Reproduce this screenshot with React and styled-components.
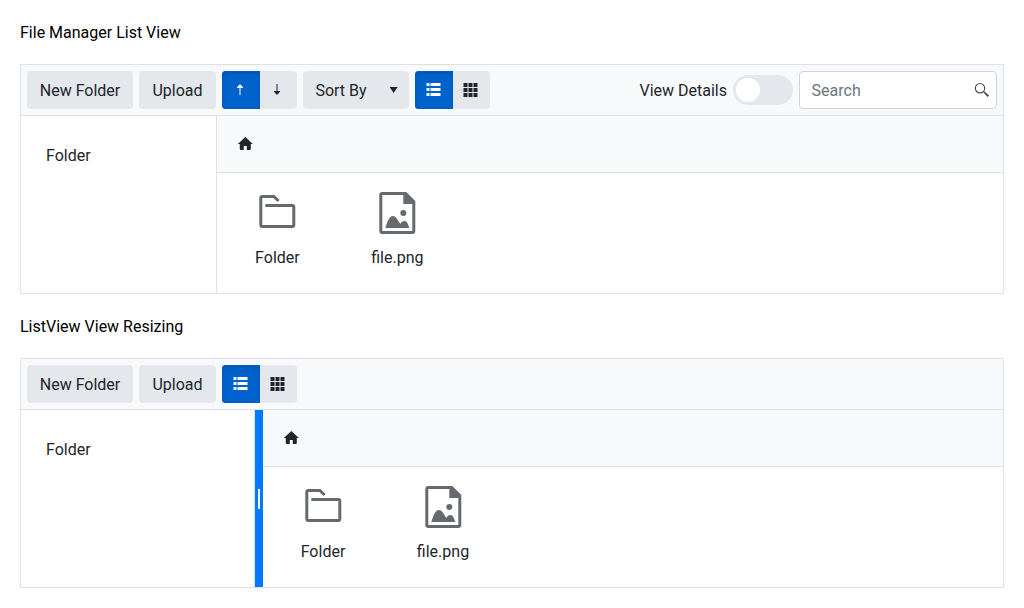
import React from 'react';
import styled, { createGlobalStyle, css } from 'styled-components';

const GlobalStyle = createGlobalStyle`
  *, *::before, *::after { box-sizing: border-box; }
  body {
    margin: 0;
    background: #fff;
    color: #000;
    font: 16px/24px Roboto, "Liberation Sans", sans-serif;
  }
`;

const Page = styled.main`
  display: flex;
  flex-direction: column;
  padding: 20px;
`;

const Title = styled.h2`
  margin: 1px 0 19px;
  font-size: 16px;
  font-weight: 400;
  line-height: 24px;
`;

const Manager = styled.section`
  display: flex;
  flex-direction: column;
  height: 230px;
  margin-bottom: 20px;
  border: 1px solid #dee2e6;
  color: #212529;
`;

const Toolbar = styled.div`
  display: flex;
  gap: 6px;
  height: 51px;
  padding: 6px;
  background: #f7f9fb;
  border-bottom: 1px solid #dee2e6;
`;

const Button = styled.button`
  display: flex;
  align-items: center;
  justify-content: ${(p) => (p.$menu ? 'space-between' : 'center')};
  width: ${(p) => p.$width}px;
  height: 38px;
  padding: ${(p) => (p.$menu ? '2px 8px 0 12.4px' : '2px 0 0')};
  border: 0;
  border-radius: 4px;
  background: #e4e7eb;
  color: #212529;
  font: inherit;
  white-space: nowrap;
`;

const ButtonGroup = styled.div`
  display: flex;
`;

const GroupButton = styled(Button)`
  padding: 0 1px 0 0;
  border-radius: 0 4px 4px 0;
  ${(p) =>
    p.$selected &&
    css`
      padding: 0;
      border-radius: 4px 0 0 4px;
      background: #0062cc;
      color: #fff;
      box-shadow: inset 0 0 0 1px #005cbf, inset 0 3px 5px rgba(0, 0, 0, 0.125);
    `}
`;

const SwitchLabel = styled.span`
  margin-left: auto;
  padding-top: 1px;
  line-height: 38px;
`;

const Switch = styled.span`
  display: flex;
  align-self: center;
  width: 60px;
  height: 30px;
  padding: 3px;
  border-radius: 15px;
  background: #e4e7eb;
`;

const Thumb = styled.span`
  width: 24px;
  height: 24px;
  border-radius: 50%;
  background: #fff;
`;

const Search = styled.div`
  display: flex;
  align-items: center;
  justify-content: space-between;
  width: 198px;
  height: 38px;
  padding: 0 6px 0 11.6px;
  border: 1px solid #ced4da;
  border-radius: 4px;
  background: #fff;
  color: #495057;
`;

const Placeholder = styled.span`
  padding-top: 2px;
  color: #6c757d;
`;

const Body = styled.div`
  display: flex;
  flex: 1;
`;

const Sidebar = styled.nav`
  width: ${(p) => p.$width}px;
  padding: 28px 25px;
  border-right: 1px solid #dee2e6;
`;

const Splitbar = styled.div`
  display: flex;
  align-items: center;
  justify-content: center;
  width: 8px;
  background: #007bff;
`;

const Grip = styled.span`
  width: 2px;
  height: 20px;
  background: #fff;
`;

const Content = styled.div`
  display: flex;
  flex: 1;
  flex-direction: column;
`;

const Breadcrumb = styled.div`
  display: flex;
  align-items: center;
  height: 57px;
  padding: 0 20px;
  background: #f7f9fb;
  border-bottom: 1px solid #dee2e6;
`;

const Files = styled.div`
  display: flex;
`;

const FileItem = styled.div`
  display: flex;
  flex-direction: column;
  align-items: center;
  gap: 9px;
  width: 120px;
  padding-top: 16px;
`;

const Svg = styled.svg`
  display: block;
  flex: none;
  width: ${(p) => p.$size || 16}px;
  height: ${(p) => p.$size || 16}px;
  fill: currentColor;
`;

const FileSvg = styled(Svg)`
  color: #656a6f;
`;

const ArrowUp = () => (
  <Svg viewBox="1 0 16 16">
    <path d="M7.500 13V6H5v-.8L8 2l3 3.200V6H8.500v7z" />
  </Svg>
);
const ArrowDown = () => (
  <Svg viewBox="1 0 16 16">
    <path d="M7.500 2v7H5v.8L8 13l3-3.200V9H8.500V2z" />
  </Svg>
);
const Caret = () => (
  <Svg viewBox="-0.600 1 16 16">
    <path d="M4 5h8l-4 6z" />
  </Svg>
);
const ListIcon = () => (
  <Svg viewBox="0.500 0 16 16">
    <path d="M1 1h3v3H1zM5 1h10v3H5zM1 6h3v3H1zM5 6h10v3H5zM1 11h3v3H1zM5 11h10v3H5z" />
  </Svg>
);
const GridIcon = () => (
  <Svg viewBox="0.500 0 16 16">
    <path d="M1 1h4v4H1zM6 1h4v4H6zM11 1h4v4h-4zM1 6h4v4H1zM6 6h4v4H6zM11 6h4v4h-4zM1 11h4v4H1zM6 11h4v4H6zM11 11h4v4h-4z" />
  </Svg>
);
const SearchIcon = () => (
  <Svg viewBox="0 0 16 16">
    <circle cx="6" cy="6.200" r="4.700" fill="none" stroke="currentColor" strokeWidth="1.200" />
    <path d="M9.200 10.300l1.100-1.100 4.900 4.300-1.600 1.600z" />
  </Svg>
);
const HomeIcon = () => (
  <Svg viewBox="0.200 0 16 16">
    <path d="M8.500 1L16 8h-2v5q0 1-1 1h-3v-4H7v4H4q-1 0-1-1V8H1z" />
  </Svg>
);
const FolderIcon = () => (
  <FileSvg $size={48} viewBox="-0.300 0 48 48">
    <path
      d="M12 16.500h27q1.500 0 1.500 1.500v18q0 1.500-1.500 1.500H9q-1.500 0-1.500-1.500V9Q7.500 7.500 9 7.500h11.500l4.800 4.500"
      fill="none"
      stroke="currentColor"
      strokeWidth="3"
    />
  </FileSvg>
);
const ImageIcon = () => (
  <FileSvg $size={48} viewBox="-0.300 0 48 48">
    <path
      fillRule="evenodd"
      d="M9 3h24l9 9v30q0 3-3 3H9q-3 0-3-3V6q0-3 3-3zM9 6v36h30V15h-9V6z"
    />
    <circle cx="30" cy="24" r="3" />
    <path d="M12 39c2-6 4-12 7.500-12S25 32 27 35c1-2 2-3 4.500-3S35 36 36 39z" />
  </FileSvg>
);

const ViewButtons = () => (
  <ButtonGroup>
    <GroupButton $width={38} $selected aria-label="List view"><ListIcon /></GroupButton>
    <GroupButton $width={37} aria-label="Grid view"><GridIcon /></GroupButton>
  </ButtonGroup>
);

const MainPane = () => (
  <Content>
    <Breadcrumb><HomeIcon /></Breadcrumb>
    <Files>
      <FileItem><FolderIcon />Folder</FileItem>
      <FileItem><ImageIcon />file.png</FileItem>
    </Files>
  </Content>
);

export default function App() {
  return (
    <Page>
      <GlobalStyle />
      <Title>File Manager List View</Title>
      <Manager>
        <Toolbar>
          <Button $width={106}>New Folder</Button>
          <Button $width={77}>Upload</Button>
          <ButtonGroup>
            <GroupButton $width={38} $selected aria-label="Ascending"><ArrowUp /></GroupButton>
            <GroupButton $width={37} aria-label="Descending"><ArrowDown /></GroupButton>
          </ButtonGroup>
          <Button $width={106} $menu>Sort By<Caret /></Button>
          <ViewButtons />
          <SwitchLabel>View Details</SwitchLabel>
          <Switch><Thumb /></Switch>
          <Search><Placeholder>Search</Placeholder><SearchIcon /></Search>
        </Toolbar>
        <Body>
          <Sidebar $width={196.4}>Folder</Sidebar>
          <MainPane />
        </Body>
      </Manager>
      <Title>ListView View Resizing</Title>
      <Manager>
        <Toolbar>
          <Button $width={106}>New Folder</Button>
          <Button $width={77}>Upload</Button>
          <ViewButtons />
        </Toolbar>
        <Body>
          <Sidebar $width={234}>Folder</Sidebar>
          <Splitbar><Grip /></Splitbar>
          <MainPane />
        </Body>
      </Manager>
    </Page>
  );
}
